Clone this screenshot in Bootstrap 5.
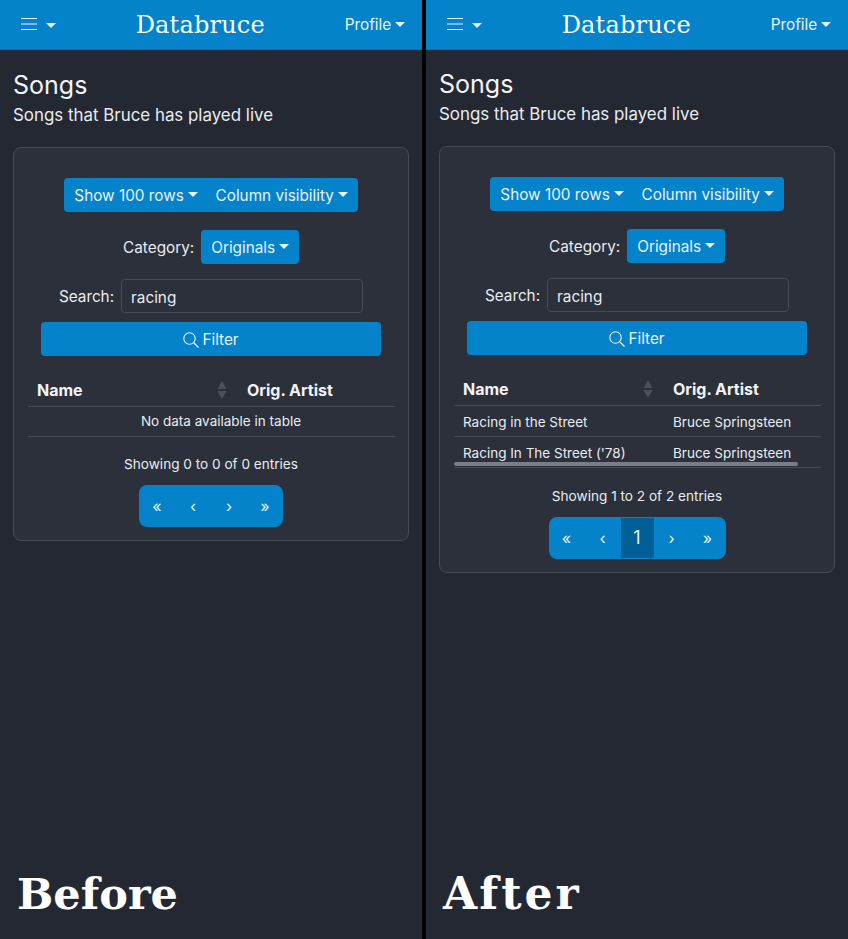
<!DOCTYPE html>
<html lang="en"><head><meta charset="utf-8"><title>Databruce</title>
<link rel="stylesheet" href="https://cdn.jsdelivr.net/npm/bootstrap@5.3.0/dist/css/bootstrap.min.css">
<style>
html,body{height:100%;margin:0}
body{background:#000;font-family:"Inter","Noto Sans",sans-serif;color:#e9ecef;overflow:hidden}
.shot{display:flex;justify-content:space-between;height:939px}
.pane{width:422px;background:#242833;display:flex;flex-direction:column}
.topbar{height:50px;background:#0482ca;border-bottom:1px solid #0670ad;padding:2px 17px 0 21px;display:flex;align-items:center;justify-content:space-between;color:#e9f3fa;font-size:15.3px;flex:none}
.burger{display:flex;align-items:center;gap:5px}
.burger svg{margin-bottom:3px}
.brand{font-family:"DejaVu Serif",serif;font-size:24px;color:#fff;margin-top:-1px;letter-spacing:.2px}
.caret-d{display:inline-block;border-top:.33em solid;border-left:.33em solid transparent;border-right:.33em solid transparent;margin-left:.25em;vertical-align:.2em}
.main{padding:21px 13px 0;flex:1;display:flex;flex-direction:column}
.pane-after .main{padding-top:20px}
.ttl{font-size:25px;font-weight:400;line-height:28px;margin:0 0 3px;color:#f2f4f6}
.sub{font-size:16.9px;line-height:27px;margin:0 0 18px;color:#e9ecef}
.panel{background:#2b303b;border:1px solid #444a56;border-radius:8px;padding:30px 14px 13px;font-size:15.3px}
.panel>*:not(.tbl){line-height:1.5}
.blue{background:#0482ca;color:#e9f3fa;border:0;font-size:15.3px;height:34px;padding:2px 10px 0;border-radius:4px;--bs-btn-hover-bg:#0482ca;--bs-btn-hover-color:#e9f3fa}
.grp{display:flex;justify-content:center;margin-bottom:18px}
.grp .blue:first-child{border-radius:4px 0 0 4px;padding-right:9px}
.grp .blue:last-child{border-radius:0 4px 4px 0;padding-left:9px}
.cat{display:flex;justify-content:center;align-items:center;gap:7px;margin-bottom:15px}
.cat>span,.srch>span{padding-top:2px}
.srch{display:flex;justify-content:center;align-items:center;gap:7px;margin-bottom:9px}
.srch .form-control{width:242px;height:34px;background:#2b303b;border:1px solid #444a56;color:#e9ecef;font-size:15.3px;padding:2px 9px 0;border-radius:4px;box-shadow:none}
.wide{display:flex;align-items:center;justify-content:center;gap:3px;width:340px;margin:0 auto 17px}
.tbl{position:relative;width:367px;font-size:13.5px}
.tbl .table{--bs-table-bg:transparent;--bs-table-color:#e9ecef;--bs-table-border-color:#444a56;margin:0;table-layout:fixed;width:367px;color:#e9ecef}
.tbl th{font-weight:700;font-size:16px;height:33px;padding:1px 9px 0;vertical-align:middle;position:relative;color:#f2f4f6}
.tbl td{height:30px;padding:0 9px;vertical-align:middle}
.pane-after .tbl td{height:31px;padding-top:3px}
.tbl td.nodata{padding-left:28px;padding-top:1px}
.c1{width:210px}
.sorter{position:absolute;right:11px;top:7px;display:block}
.scrollthumb{position:absolute;left:0;top:90px;width:344px;height:4px;background:#7a7d86;border-radius:2px}
.info{text-align:center;font-size:13.6px;line-height:20px;margin:17px 0 11px;color:#e9ecef}
.pane-after .info{margin-top:18px}
.pgr{display:flex;justify-content:center;margin:0;--bs-border-width:0px}
.pgr .page-link{background:#0482ca;color:#e9f3fa;border:0;height:42px;line-height:42px;padding:0;width:36px;text-align:center;font-size:16px;border-radius:0}
.pgr .page-item:first-child .page-link{border-radius:8px 0 0 8px}
.pgr .page-item:last-child .page-link{border-radius:0 8px 8px 0}
.pgr .page-item.active .page-link{background:#005f95;color:#e9f3fa;font-size:18px;width:33px;border-top:1px solid #0482ca;border-bottom:1px solid #0482ca;line-height:40px}
.stamp{margin-top:auto;font-family:"DejaVu Serif",serif;font-weight:700;font-size:43px;line-height:52px;color:#fff;padding:0 0 19px 4px}
.pane-after .stamp{font-size:44px;letter-spacing:3px;padding-bottom:19px}
</style></head><body>
<div class="shot">
<section class="pane pane-before">
<nav class="topbar"><span class="burger"><svg width="16" height="14" viewBox="0 0 16 14"><path d="M0 1.5h16M0 7h16M0 12.5h16" stroke="#e9f3fa" stroke-width="1.2" fill="none"/></svg><span class="caret-d"></span></span><span class="brand">Databruce</span><span>Profile<span class="caret-d"></span></span></nav>
<div class="main">
<h1 class="ttl">Songs</h1><p class="sub">Songs that Bruce has played live</p>
<div class="panel">
<div class="grp"><button class="btn blue">Show 100 rows<span class="caret-d"></span></button><button class="btn blue">Column visibility<span class="caret-d"></span></button></div>
<div class="cat"><span>Category:</span><button class="btn blue">Originals<span class="caret-d"></span></button></div>
<div class="srch"><span>Search:</span><input class="form-control" value="racing"></div>
<button class="btn blue wide"><svg width="16" height="16" viewBox="0 0 16 16"><circle cx="6.5" cy="6.5" r="5.7" stroke="#e9f3fa" stroke-width="1.1" fill="none"/><path d="M10.7 10.7L15.5 15.5" stroke="#e9f3fa" stroke-width="1.3"/></svg>Filter</button>
<div class="tbl"><table class="table"><thead><tr><th class="c1">Name<svg class="sorter" width="10" height="20" viewBox="0 0 10 20"><path d="M5 1l4.5 8h-9zM5 19l4.5-8h-9z" fill="#4a505c"/></svg></th><th>Orig. Artist</th></tr></thead><tbody><tr><td colspan="2" class="text-center nodata">No data available in table</td></tr></tbody></table></div>
<div class="info">Showing 0 to 0 of 0 entries</div>
<ul class="pagination pgr"><li class="page-item"><a class="page-link" href="#">«</a></li><li class="page-item"><a class="page-link" href="#">‹</a></li><li class="page-item"><a class="page-link" href="#">›</a></li><li class="page-item"><a class="page-link" href="#">»</a></li></ul>
</div>
<div class="stamp">Before</div>
</div></section>
<section class="pane pane-after">
<nav class="topbar"><span class="burger"><svg width="16" height="14" viewBox="0 0 16 14"><path d="M0 1.5h16M0 7h16M0 12.5h16" stroke="#e9f3fa" stroke-width="1.2" fill="none"/></svg><span class="caret-d"></span></span><span class="brand">Databruce</span><span>Profile<span class="caret-d"></span></span></nav>
<div class="main">
<h1 class="ttl">Songs</h1><p class="sub">Songs that Bruce has played live</p>
<div class="panel">
<div class="grp"><button class="btn blue">Show 100 rows<span class="caret-d"></span></button><button class="btn blue">Column visibility<span class="caret-d"></span></button></div>
<div class="cat"><span>Category:</span><button class="btn blue">Originals<span class="caret-d"></span></button></div>
<div class="srch"><span>Search:</span><input class="form-control" value="racing"></div>
<button class="btn blue wide"><svg width="16" height="16" viewBox="0 0 16 16"><circle cx="6.5" cy="6.5" r="5.7" stroke="#e9f3fa" stroke-width="1.1" fill="none"/><path d="M10.7 10.7L15.5 15.5" stroke="#e9f3fa" stroke-width="1.3"/></svg>Filter</button>
<div class="tbl"><table class="table"><thead><tr><th class="c1">Name<svg class="sorter" width="10" height="20" viewBox="0 0 10 20"><path d="M5 1l4.5 8h-9zM5 19l4.5-8h-9z" fill="#4a505c"/></svg></th><th>Orig. Artist</th></tr></thead><tbody><tr><td>Racing in the Street</td><td>Bruce Springsteen</td></tr><tr><td>Racing In The Street ('78)</td><td>Bruce Springsteen</td></tr></tbody></table><div class="scrollthumb"></div></div>
<div class="info">Showing 1 to 2 of 2 entries</div>
<ul class="pagination pgr"><li class="page-item"><a class="page-link" href="#">«</a></li><li class="page-item"><a class="page-link" href="#">‹</a></li><li class="page-item active"><a class="page-link" href="#">1</a></li><li class="page-item"><a class="page-link" href="#">›</a></li><li class="page-item"><a class="page-link" href="#">»</a></li></ul>
</div>
<div class="stamp">After</div>
</div></section>
</div>
</body></html>
